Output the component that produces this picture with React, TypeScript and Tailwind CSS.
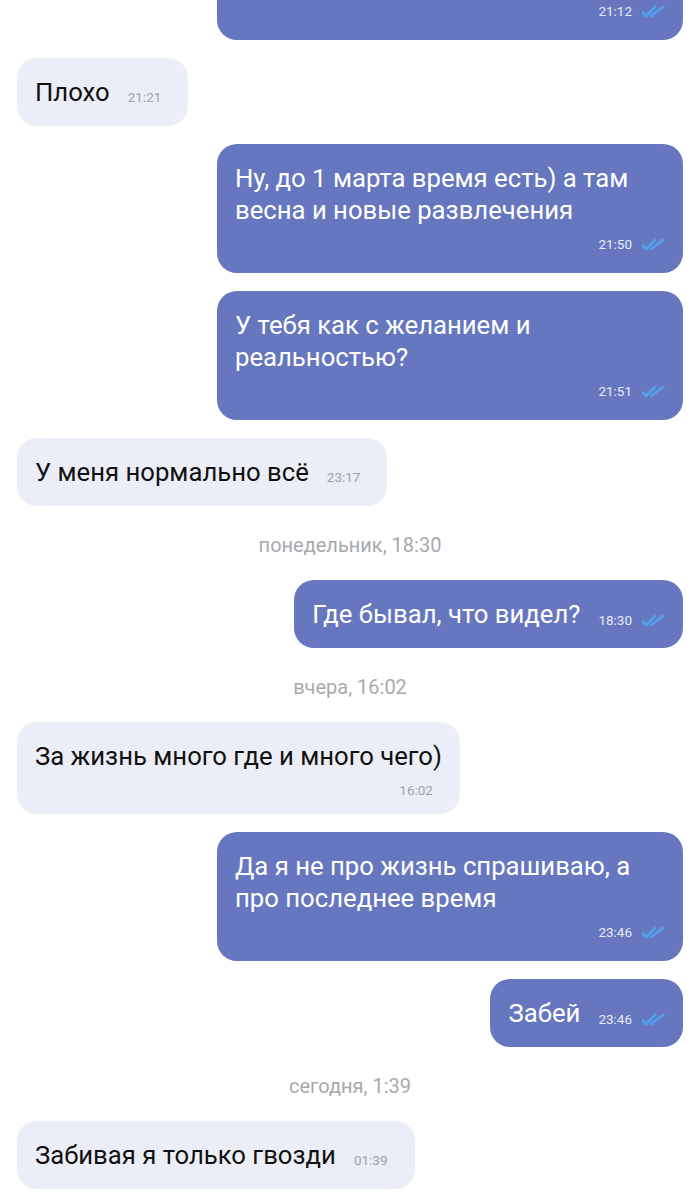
import React from "react";

const Checks = () => (
  <svg width="24" height="13" viewBox="0 0 24 13" className="shrink-0" fill="none">
    <path d="M2 7.5 L5 11 L14 2" stroke="#4fa3ea" strokeWidth="2.6" strokeLinecap="round" strokeLinejoin="round" />
    <path d="M10 11 L22 2" stroke="#4fa3ea" strokeWidth="2.6" strokeLinecap="round" strokeLinejoin="round" />
  </svg>
);

const OutTime = ({ t }: { t: string }) => (
  <div className="flex items-center gap-[9px] shrink-0">
    <span className="text-[13.5px] leading-[18px] text-[#e6e9f6]">{t}</span>
    <Checks />
  </div>
);

const InTime = ({ t }: { t: string }) => (
  <span className="text-[13.5px] leading-[18px] text-[#9fa1a8] shrink-0">{t}</span>
);

const OutSingle = ({ text, t }: { text: string; t: string }) => (
  <div className="flex justify-end pr-[17px]">
    <div className="flex items-end gap-[18px] bg-[#6677bf] rounded-[20px] pl-[18px] pr-[18px] py-[18px]">
      <span className="text-[25.7px] leading-[32px] text-white">{text}</span>
      <div className="mb-[1px]">
        <OutTime t={t} />
      </div>
    </div>
  </div>
);

const OutMulti = ({ lines, t }: { lines: string[]; t: string }) => (
  <div className="flex justify-end pr-[17px]">
    <div className="w-[466px] bg-[#6677bf] rounded-[20px] pl-[18px] pr-[18px] pt-[18px] pb-[20px]">
      <div className="text-[25.7px] leading-[32px] text-white">
        {lines.map((l, i) => (
          <div key={i}>{l}</div>
        ))}
      </div>
      <div className="flex justify-end mt-[9px]">
        <OutTime t={t} />
      </div>
    </div>
  </div>
);

const InSingle = ({ text, t }: { text: string; t: string }) => (
  <div className="flex justify-start pl-[17px]">
    <div className="flex items-end gap-[18px] bg-[#ebeef6] rounded-[20px] pl-[18px] pr-[27px] py-[18px]">
      <span className="text-[25.7px] leading-[32px] text-[#111]">{text}</span>
      <div className="mb-[-1px]">
        <InTime t={t} />
      </div>
    </div>
  </div>
);

const InWrapTime = ({ text, t }: { text: string; t: string }) => (
  <div className="flex justify-start pl-[17px]">
    <div className="bg-[#ebeef6] rounded-[20px] pl-[18px] pr-[18px] pt-[18px] pb-[15px]">
      <div className="text-[25.7px] leading-[32px] text-[#111]">{text}</div>
      <div className="flex justify-end mt-[9px] pr-[9px]">
        <InTime t={t} />
      </div>
    </div>
  </div>
);

const DateSep = ({ text }: { text: string }) => (
  <div className="flex justify-center pt-[11px] pb-[7px] text-[20px] leading-[20px] text-[#a8a9ad]">
    {text}
  </div>
);

export default function App() {
  return (
    <div
      className="w-[700px] h-[1204px] bg-white overflow-hidden flex flex-col gap-[18px]"
      style={{ fontFamily: "Roboto, 'Noto Sans', sans-serif" }}
    >
      <div className="flex justify-end pr-[17px]">
        <div className="w-[466px] bg-[#6677bf] rounded-b-[20px] pl-[18px] pr-[18px] pt-[2px] pb-[20px] flex justify-end">
          <OutTime t="21:12" />
        </div>
      </div>
      <InSingle text="Плохо" t="21:21" />
      <OutMulti lines={["Ну, до 1 марта время есть) а там", "весна и новые развлечения"]} t="21:50" />
      <OutMulti lines={["У тебя как с желанием и", "реальностью?"]} t="21:51" />
      <InSingle text="У меня нормально всё" t="23:17" />
      <DateSep text="понедельник, 18:30" />
      <OutSingle text="Где бывал, что видел?" t="18:30" />
      <DateSep text="вчера, 16:02" />
      <InWrapTime text="За жизнь много где и много чего)" t="16:02" />
      <OutMulti lines={["Да я не про жизнь спрашиваю, а", "про последнее время"]} t="23:46" />
      <OutSingle text="Забей" t="23:46" />
      <DateSep text="сегодня, 1:39" />
      <InSingle text="Забивая я только гвозди" t="01:39" />
    </div>
  );
}
